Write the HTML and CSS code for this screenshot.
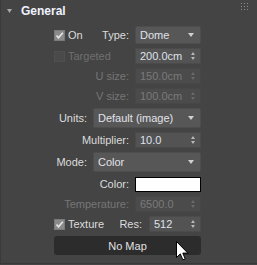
FILE: index.html
```html
<!DOCTYPE html>
<html>
<head>
<meta charset="utf-8">
<link rel="stylesheet" href="styles.css">
</head>
<body>
<div class="panel">
  <div class="header">
    <svg class="tri" width="5" height="4" viewBox="0 0 5 4"><path d="M0 0H5L2.5 4Z" fill="#a8a8a8"/></svg>
    <span class="title">General</span>
    <svg class="grip" width="7" height="7" viewBox="0 0 7 7">
      <g fill="#8c8c8c">
        <rect x="0" y="0" width="1" height="1"/><rect x="3" y="0" width="1" height="1"/><rect x="6" y="0" width="1" height="1"/>
        <rect x="0" y="3" width="1" height="1"/><rect x="3" y="3" width="1" height="1"/><rect x="6" y="3" width="1" height="1"/>
        <rect x="0" y="6" width="1" height="1"/><rect x="3" y="6" width="1" height="1"/><rect x="6" y="6" width="1" height="1"/>
      </g>
    </svg>
  </div>
  <div class="body">
    <div class="row h18">
      <label class="check"><span class="box on"><svg width="9" height="9" viewBox="0 0 9 9"><path d="M1.5 4.5L3.5 6.8L7.8 1.8" stroke="#e6e6e6" stroke-width="1.6" fill="none"/></svg></span>On</label>
      <span class="lbl">Type:</span>
      <div class="drop w66"><span>Dome</span><i class="arrow"></i></div>
    </div>
    <div class="row">
      <label class="check dis"><span class="box"></span>Targeted</label>
      <div class="spin w66"><span>200.0cm</span><i class="ud"></i></div>
    </div>
    <div class="row">
      <span class="lbl dis">U size:</span>
      <div class="spin w66 off"><span>150.0cm</span><i class="ud"></i></div>
    </div>
    <div class="row">
      <span class="lbl dis">V size:</span>
      <div class="spin w66 off"><span>100.0cm</span><i class="ud"></i></div>
    </div>
    <div class="row h20">
      <span class="lbl">Units:</span>
      <div class="drop w108"><span>Default (image)</span><i class="arrow"></i></div>
    </div>
    <div class="row">
      <span class="lbl">Multiplier:</span>
      <div class="spin w66"><span>10.0</span><i class="ud"></i></div>
    </div>
    <div class="row h20">
      <span class="lbl">Mode:</span>
      <div class="drop w108"><span>Color</span><i class="arrow"></i></div>
    </div>
    <div class="row">
      <span class="lbl">Color:</span>
      <div class="swatch w66"></div>
    </div>
    <div class="row">
      <span class="lbl dis">Temperature:</span>
      <div class="spin w66 off"><span>6500.0</span><i class="ud"></i></div>
    </div>
    <div class="row">
      <label class="check"><span class="box on"><svg width="9" height="9" viewBox="0 0 9 9"><path d="M1.5 4.5L3.5 6.8L7.8 1.8" stroke="#e6e6e6" stroke-width="1.6" fill="none"/></svg></span>Texture</label>
      <span class="lbl res">Res:</span>
      <div class="spin w52"><span>512</span><i class="ud"></i></div>
    </div>
    <div class="row h19">
      <div class="btn">No Map</div>
    </div>
  </div>
  <svg class="cursor" width="13" height="20" viewBox="0 0 13 20"><path d="M0.5 0.5V16.5L4.3 12.9L6.8 18.8L9.2 17.8L6.8 12.1H11.8Z" fill="#fff" stroke="#000" stroke-width="1"/></svg>
</div>
</body>
</html>
```
FILE: styles.css
```css
html, body { margin: 0; padding: 0; }
body {
  width: 257px;
  height: 265px;
  background: #444444;
  font-family: "Liberation Sans", Arial, sans-serif;
  font-size: 11px;
  color: #dcdcdc;
  overflow: hidden;
}
.panel {
  position: relative;
  width: 257px;
  height: 264px;
  box-sizing: border-box;
  border-left: 1px solid #3a3a3a;
  border-bottom: 1px solid #383838;
  background: #444444;
}
.header {
  height: 22px;
  display: flex;
  align-items: center;
  padding-left: 6px;
}
.tri { margin-top: 0; }
.title {
  margin-left: 9px;
  font-weight: bold;
  font-size: 12px;
  color: #f0f2ff;
  flex: 1;
}
.grip { margin-right: 9px; margin-top: -10px; }
.body {
  padding-top: 4px;
  display: flex;
  flex-direction: column;
  gap: 4px;
}
.row {
  height: 16px;
  display: flex;
  align-items: center;
  justify-content: flex-end;
  padding-left: 53px;
  padding-right: 56px;
  gap: 6px;
}
.row.h18 { height: 18px; }
.row.h20 { height: 20px; }
.row.h19 { height: 19px; }
.check {
  display: flex;
  align-items: center;
  gap: 3px;
  margin-right: auto;
}
.check.dis { color: #6f6f6f; }
.box {
  width: 9px;
  height: 9px;
  background: #5e5e5e;
  border: 1px solid #555;
  display: flex;
  box-sizing: content-box;
}
.box.on { background: #8a8a8a; border-color: #7a7a7a; }
.check.dis .box { background: #4a4a4a; border-color: #505050; }
.lbl { white-space: nowrap; }
.lbl.dis { color: #767676; }
.lbl.res { margin-right: 1px; }
.drop, .spin, .swatch {
  box-sizing: border-box;
  height: 100%;
  display: flex;
  align-items: center;
  position: relative;
}
.w66 { width: 66px; }
.w108 { width: 108px; }
.w52 { width: 52px; }
.drop {
  background: #575757;
  border: 1px solid #4d4d4d;
  border-radius: 2px;
  padding-left: 4px;
  color: #e2e2ea;
}
.spin {
  background: #535353;
  border: 1px solid #4b4b4b;
  padding-left: 4px;
  color: #dfe2ec;
}
.spin.off { background: #4b4b4b; color: #7a7a7a; border-color: #474747; }
.drop span, .spin span { flex: 1; }
.arrow {
  position: absolute;
  right: 6px;
  top: 50%;
  margin-top: -2px;
  width: 0; height: 0;
  border-left: 3px solid transparent;
  border-right: 3px solid transparent;
  border-top: 4px solid #d0d0d0;
}
.ud {
  position: absolute;
  right: 4px;
  top: 50%;
  margin-top: -4px;
  width: 5px;
  height: 8px;
}
.ud::before, .ud::after {
  content: "";
  position: absolute;
  left: 0;
  width: 0; height: 0;
  border-left: 2.5px solid transparent;
  border-right: 2.5px solid transparent;
}
.ud::before { top: 0; border-bottom: 3px solid #b8b8b8; }
.ud::after { bottom: 0; border-top: 3px solid #b8b8b8; }
.spin.off .ud::before { border-bottom-color: #6a6a6a; }
.spin.off .ud::after { border-top-color: #6a6a6a; }
.swatch {
  height: 15px;
  background: #ffffff;
  border: 1px solid #000;
}
.btn {
  flex: 1;
  height: 100%;
  background: #2c2c2c;
  border-radius: 3px;
  display: flex;
  align-items: center;
  justify-content: center;
  color: #e0e0e0;
}
.cursor {
  position: absolute;
  left: 175px;
  top: 241px;
}
```
